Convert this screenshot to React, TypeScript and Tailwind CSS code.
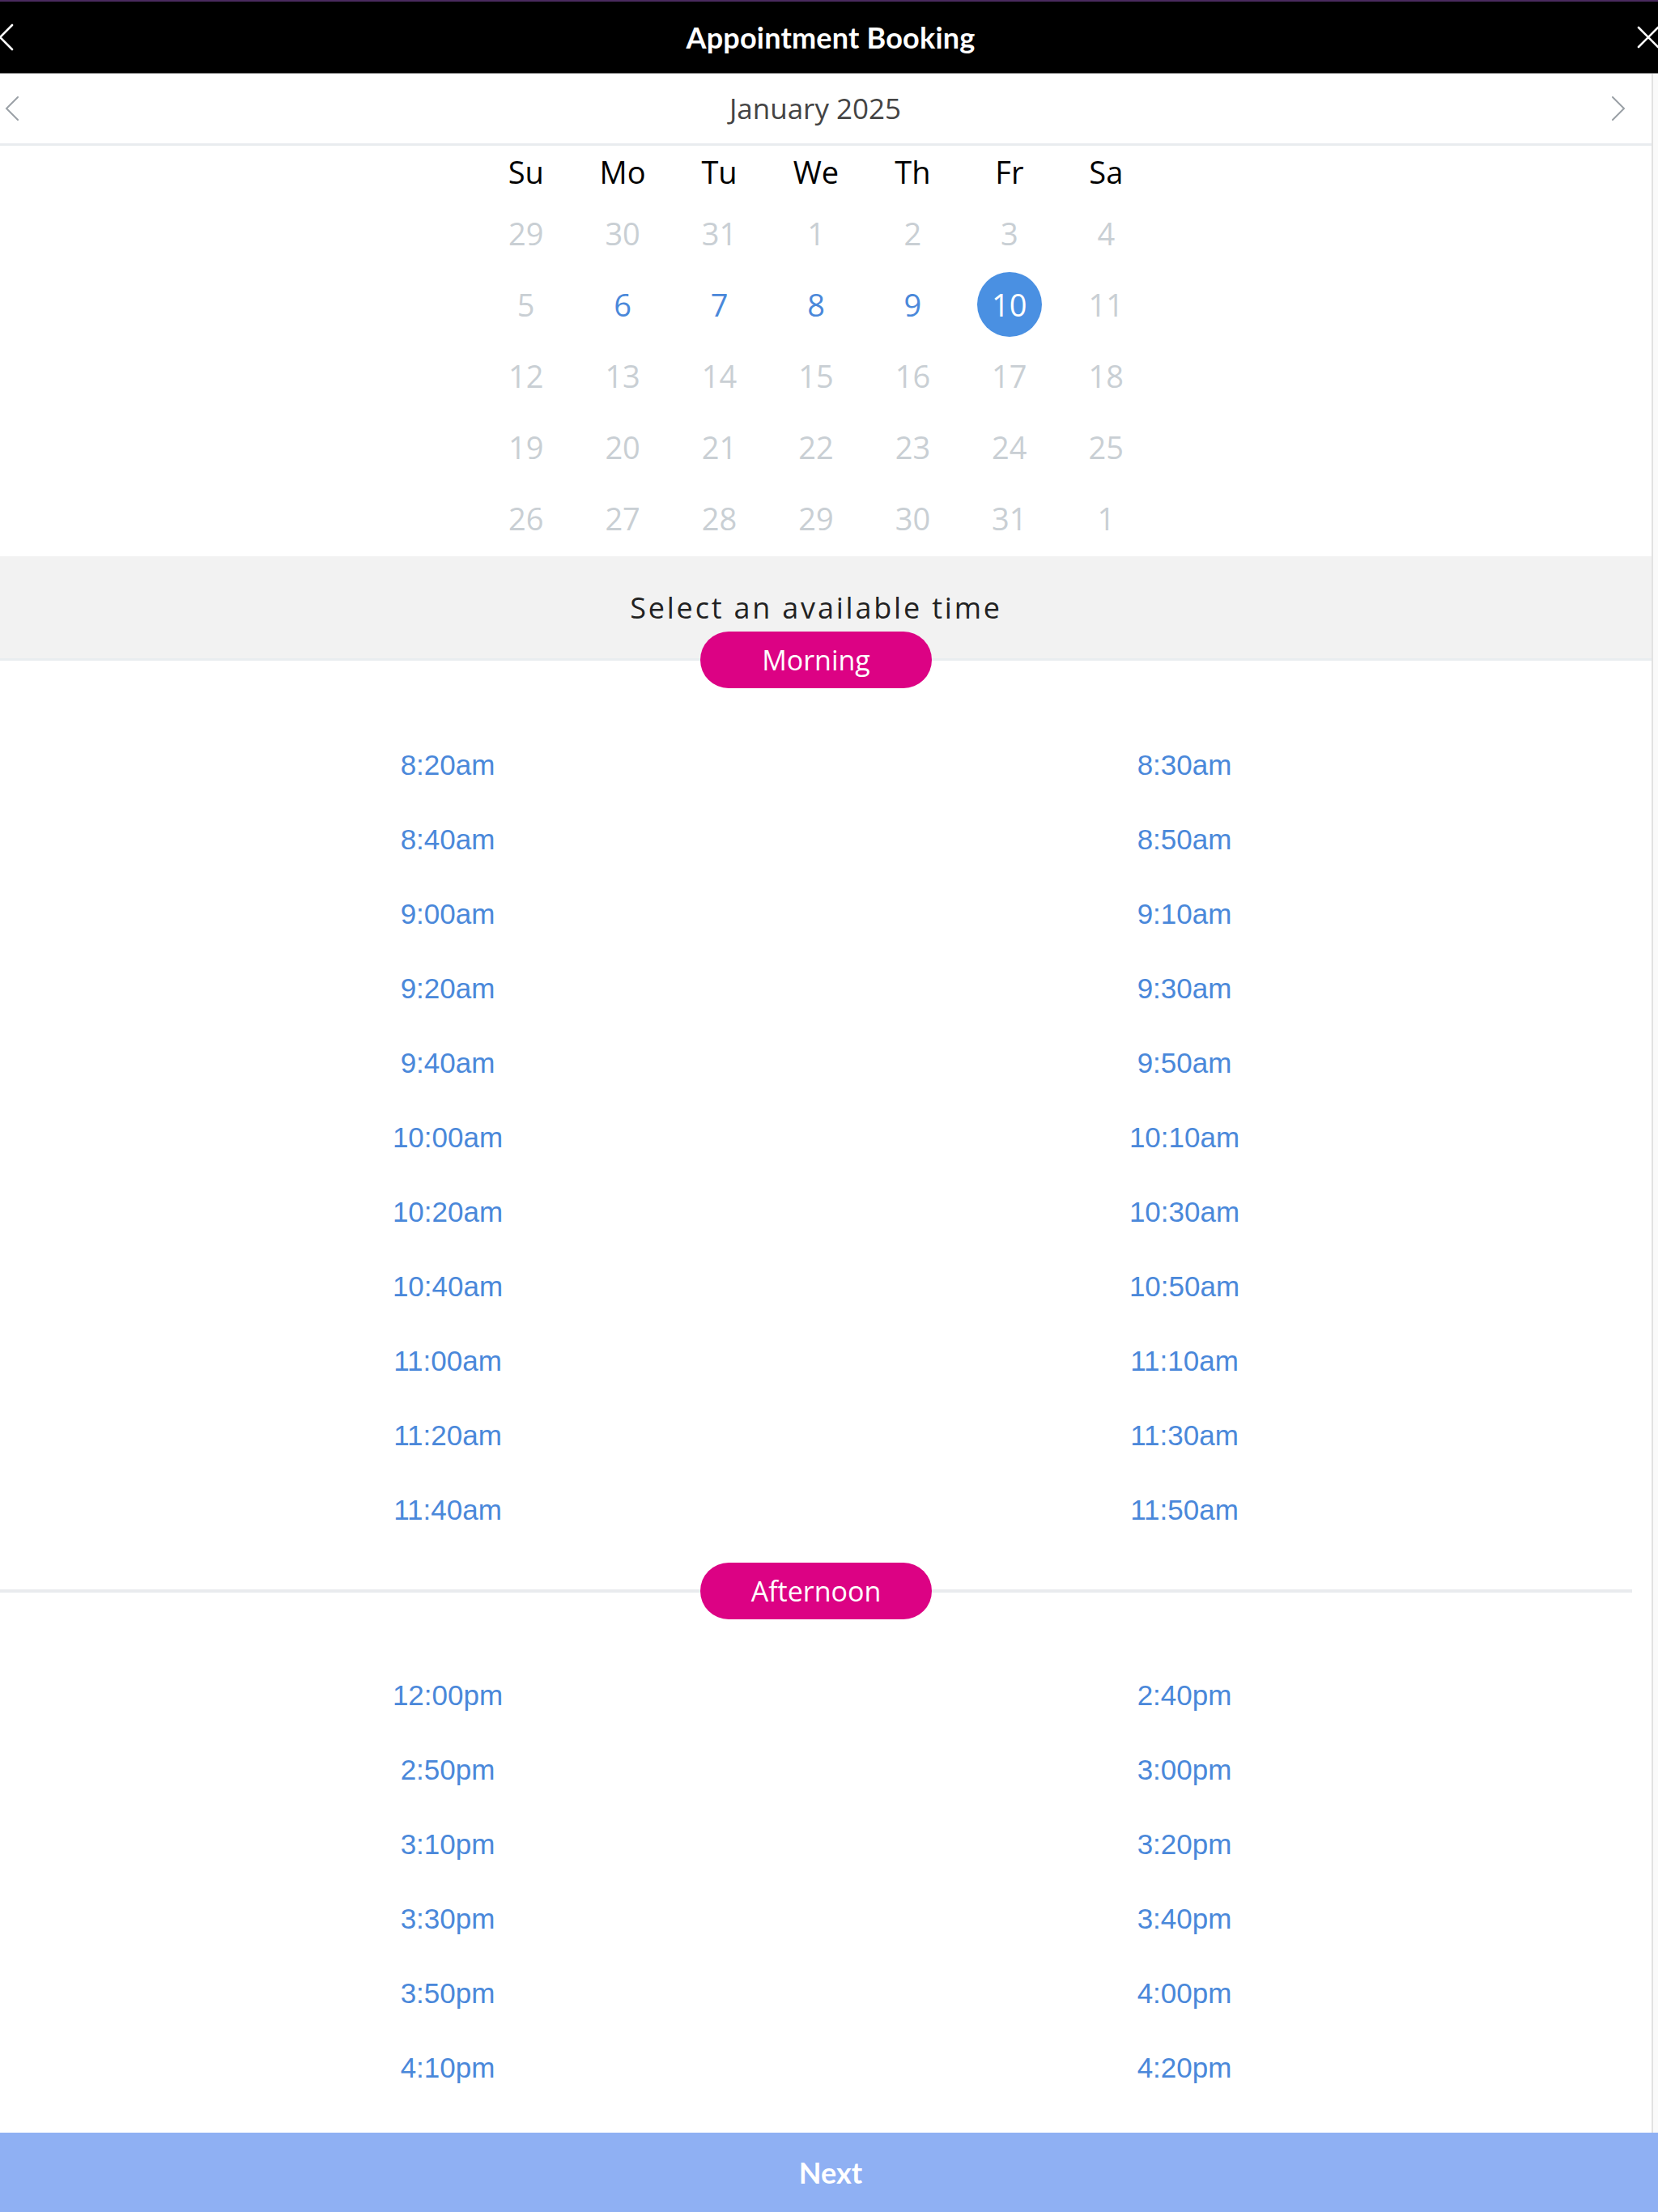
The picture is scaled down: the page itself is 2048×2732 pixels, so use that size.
import React from 'react';

const WEEKDAYS = ['Su', 'Mo', 'Tu', 'We', 'Th', 'Fr', 'Sa'];

type Day = { label: number; kind: 'muted' | 'open' | 'selected' };

const WEEKS: Day[][] = [
  [29, 30, 31, 1, 2, 3, 4].map((d) => ({ label: d, kind: 'muted' as const })),
  [
    { label: 5, kind: 'muted' },
    { label: 6, kind: 'open' },
    { label: 7, kind: 'open' },
    { label: 8, kind: 'open' },
    { label: 9, kind: 'open' },
    { label: 10, kind: 'selected' },
    { label: 11, kind: 'muted' },
  ],
  [12, 13, 14, 15, 16, 17, 18].map((d) => ({ label: d, kind: 'muted' as const })),
  [19, 20, 21, 22, 23, 24, 25].map((d) => ({ label: d, kind: 'muted' as const })),
  [26, 27, 28, 29, 30, 31, 1].map((d) => ({ label: d, kind: 'muted' as const })),
];

const MORNING = [
  '8:20am', '8:30am', '8:40am', '8:50am', '9:00am', '9:10am', '9:20am', '9:30am',
  '9:40am', '9:50am', '10:00am', '10:10am', '10:20am', '10:30am', '10:40am', '10:50am',
  '11:00am', '11:10am', '11:20am', '11:30am', '11:40am', '11:50am',
];

const AFTERNOON = [
  '12:00pm', '2:40pm', '2:50pm', '3:00pm', '3:10pm', '3:20pm', '3:30pm', '3:40pm',
  '3:50pm', '4:00pm', '4:10pm', '4:20pm', '4:30pm', '4:40pm', '4:50pm', '5:00pm',
];

function Pill({ label }: { label: string }) {
  return (
    <div className="w-[286px] h-[70px] rounded-full bg-[#dc0284] flex items-center justify-center text-white text-[34px] font-['Open_Sans',sans-serif] shrink-0">
      {label}
    </div>
  );
}

function TimeGrid({ times }: { times: string[] }) {
  return (
    <div className="grid grid-cols-2 px-[98px]">
      {times.map((t) => (
        <button
          key={t}
          className="h-[92px] flex items-center justify-center text-[35px] text-[#4a88da] font-['Liberation_Sans',Arial,sans-serif]"
        >
          {t}
        </button>
      ))}
    </div>
  );
}

export default function App() {
  return (
    <div className="w-[2048px] h-[2732px] flex flex-col overflow-hidden bg-white">
      {/* Top bar */}
      <div className="h-[91px] shrink-0 bg-black border-t-2 border-[#4a2a5e] border-b border-b-[#777] flex items-center text-white">
        <div className="w-[30px] shrink-0 flex">
          <svg width="20" height="34" viewBox="0 0 20 34" className="-ml-[3px]" fill="none" stroke="white" strokeWidth="2.6" strokeLinecap="round">
            <path d="M18 2 L3 17 L18 32" />
          </svg>
        </div>
        <h1 className="flex-1 text-center text-[36px] font-bold font-['Lato',sans-serif] tracking-[0.2px]">
          Appointment Booking
        </h1>
        <svg width="28" height="28" viewBox="0 0 28 28" className="-mr-[2px] shrink-0" fill="none" stroke="white" strokeWidth="2.6" strokeLinecap="round">
          <path d="M2 2 L26 26 M26 2 L2 26" />
        </svg>
      </div>

      {/* Scroll area */}
      <div className="flex-1 flex overflow-hidden">
        <div className="flex-1 flex flex-col overflow-hidden">
          {/* Month nav */}
          <div className="h-[89px] shrink-0 border-b-[3px] border-[#e9ecef] flex">
            <div className="w-[2016px] flex items-center justify-between px-[6px]">
              <svg width="18" height="30" viewBox="0 0 18 30" fill="none" stroke="#9aa0a6" strokeWidth="2" strokeLinecap="round">
                <path d="M16 1 L2 15 L16 29" />
              </svg>
              <span className="text-[35px] text-[#444] font-['Open_Sans',sans-serif]">January 2025</span>
              <svg width="18" height="30" viewBox="0 0 18 30" fill="none" stroke="#9aa0a6" strokeWidth="2" strokeLinecap="round" className="mr-[2px]">
                <path d="M2 1 L16 15 L2 29" />
              </svg>
            </div>
          </div>

          {/* Calendar */}
          <div className="shrink-0 w-[2016px] pb-[3px] font-['Open_Sans',sans-serif]">
            <div className="w-[836px] mx-auto grid grid-cols-7">
              {WEEKDAYS.map((d) => (
                <div key={d} className="h-[64px] flex items-center justify-center text-[38px] text-black">
                  {d}
                </div>
              ))}
              {WEEKS.flat().map((day, i) => (
                <div key={i} className="h-[88px] flex items-center justify-center">
                  {day.kind === 'selected' ? (
                    <span className="w-[80px] h-[80px] rounded-full bg-[#4a90e2] text-white text-[38px] flex items-center justify-center">
                      {day.label}
                    </span>
                  ) : (
                    <span className={`text-[38px] ${day.kind === 'open' ? 'text-[#4a88da]' : 'text-[#c9cfd4]'}`}>
                      {day.label}
                    </span>
                  )}
                </div>
              ))}
            </div>
          </div>

          {/* Prompt band */}
          <div className="h-[129px] shrink-0 bg-[#f2f2f2] border-b-[3px] border-[#e9edf0]">
            <div className="w-[2016px] pt-[44px] text-center text-[36px] leading-[40px] tracking-[2.8px] text-[#222] font-['Open_Sans',sans-serif]">
              Select an available time
            </div>
          </div>

          <div className="w-[2016px] shrink-0">
            <div className="flex justify-center -mt-[36px]">
              <Pill label="Morning" />
            </div>

            <div className="pt-[49px]">
              <TimeGrid times={MORNING} />
            </div>

            <div className="mt-[19px] flex items-center">
              <div className="flex-1 h-[4px] bg-[#e9ebee]" />
              <Pill label="Afternoon" />
              <div className="flex-1 h-[4px] bg-[#e9ebee]" />
            </div>

            <div className="pt-[48px]">
              <TimeGrid times={AFTERNOON} />
            </div>
          </div>
        </div>
        {/* scrollbar track */}
        <div className="w-[8px] shrink-0 bg-[#fafafa] border-l-2 border-[#e2e2e2]" />
      </div>

      {/* Next */}
      <button className="h-[98px] shrink-0 bg-[#8fb0f3] text-white text-[36px] font-bold font-['Lato',sans-serif] flex items-center justify-center pl-[4px]">
        Next
      </button>
    </div>
  );
}
